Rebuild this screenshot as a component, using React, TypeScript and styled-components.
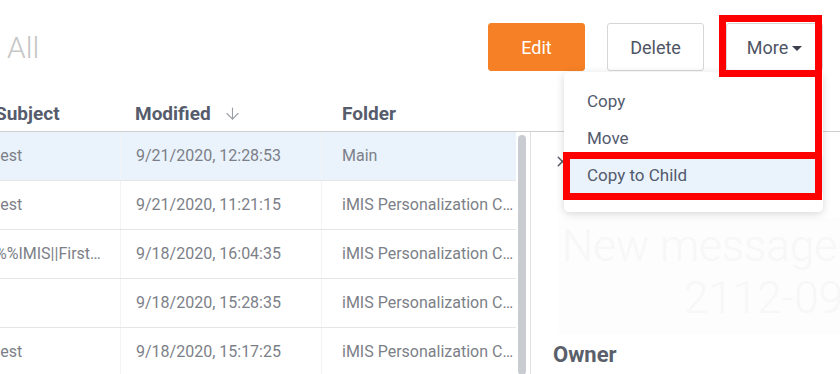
import React from 'react';
import styled, { createGlobalStyle } from 'styled-components';
import { ArrowDown, X } from 'lucide-react';

const rows = [
  { subject: 'test', modified: '9/21/2020, 12:28:53', folder: 'Main', selected: true },
  { subject: 'test', modified: '9/21/2020, 11:21:15', folder: 'iMIS Personalization Content' },
  { subject: '%%IMIS||FirstName%%', modified: '9/18/2020, 16:04:35', folder: 'iMIS Personalization Content' },
  { subject: '', modified: '9/18/2020, 15:28:35', folder: 'iMIS Personalization Content' },
  { subject: 'test', modified: '9/18/2020, 15:17:25', folder: 'iMIS Personalization Content' },
];

function App() {
  return (
    <>
      <GlobalStyle />
      <Page>
        <TopBar>
          <Title>All</Title>
          <Actions>
            <Button $primary>Edit</Button>
            <Button>Delete</Button>
            <Button>
              More
              <Caret />
            </Button>
          </Actions>
        </TopBar>

        <HeaderRow>
          <HeaderCell>Subject</HeaderCell>
          <HeaderCell>
            Modified
            <ArrowDown size={19} strokeWidth={1.4} color="#9a9da5" />
          </HeaderCell>
          <HeaderCell>Folder</HeaderCell>
        </HeaderRow>

        <Body>
          <TableBody>
            <Rows>
              {rows.map((row, i) => (
                <Row key={i} $selected={row.selected}>
                  <Cell>{row.subject}</Cell>
                  <Cell>{row.modified}</Cell>
                  <Cell>{row.folder}</Cell>
                </Row>
              ))}
            </Rows>
            <ScrollTrack>
              <ScrollThumb />
            </ScrollTrack>
          </TableBody>

          <Panel>
            <CloseButton>
              <X size={17} strokeWidth={2} />
            </CloseButton>
            <Ghost>
              <GhostLine>New message</GhostLine>
              <GhostLine $indent>2112-0920</GhostLine>
            </Ghost>
            <Label>Owner</Label>
          </Panel>
        </Body>

        <Menu>
          <MenuItem>Copy</MenuItem>
          <MenuItem>Move</MenuItem>
          <MenuItem $active>Copy to Child</MenuItem>
        </Menu>

        <MarkMore />
        <MarkLink />
        <MarkItem />
      </Page>
    </>
  );
}

const GlobalStyle = createGlobalStyle`
  html, body {
    margin: 0;
    padding: 0;
    background: #fff;
  }
  body {
    font-family: Roboto, "Noto Sans", sans-serif;
  }
`;

const Page = styled.div`
  position: relative;
  width: 840px;
  height: 374px;
  overflow: hidden;
  background: #fff;
`;

const TopBar = styled.div`
  display: flex;
  align-items: center;
  justify-content: space-between;
  height: 95px;
  padding: 0 17px 0 7px;
  box-sizing: border-box;
`;

const Title = styled.h1`
  margin: 0;
  font-size: 30px;
  font-weight: 300;
  color: #c6c6c6;
`;

const Actions = styled.div`
  display: flex;
  gap: 22px;
  margin-top: -1px;
`;

const Button = styled.button<{ $primary?: boolean }>`
  display: flex;
  align-items: center;
  justify-content: center;
  gap: 4px;
  width: 97px;
  height: 48px;
  padding: 0;
  border-radius: 3px;
  font-family: Roboto, sans-serif;
  font-size: 18px;
  border: 1px solid ${({ $primary }) => ($primary ? '#f58025' : '#d6d6d6')};
  background: ${({ $primary }) => ($primary ? '#f58025' : '#fff')};
  color: ${({ $primary }) => ($primary ? '#fff' : '#4f5464')};
`;

const Caret = styled.span`
  width: 0;
  height: 0;
  border-left: 5px solid transparent;
  border-right: 5px solid transparent;
  border-top: 5px solid #3a3f4c;
  margin-top: 2px;
`;

const HeaderRow = styled.div`
  display: grid;
  grid-template-columns: 140px 201px 1fr;
  margin-left: -20px;
  height: 36px;
  border-bottom: 1px solid #cfcfcf;
`;

const HeaderCell = styled.div`
  display: flex;
  align-items: center;
  gap: 12px;
  padding-left: 15px;
  font-size: 19px;
  font-weight: 700;
  color: #565c6c;
  &:nth-child(3) {
    padding-left: 21px;
  }
`;

const Body = styled.div`
  display: flex;
  height: 243px;
`;

const TableBody = styled.div`
  display: flex;
  width: 550px;
  margin-left: -20px;
  flex-shrink: 0;
`;

const Rows = styled.div`
  flex: 1;
  min-width: 0;
`;

const Row = styled.div<{ $selected?: boolean }>`
  display: grid;
  grid-template-columns: 140px 201px 1fr;
  height: 49px;
  border-bottom: 1px solid #e6e6e6;
  box-sizing: border-box;
  background: ${({ $selected }) => ($selected ? '#eaf3fc' : '#fff')};
`;

const Cell = styled.div`
  padding: 0 8px 0 15px;
  font-size: 16px;
  line-height: 48px;
  color: #7c7f88;
  white-space: nowrap;
  overflow: hidden;
  text-overflow: ellipsis;
  min-width: 0;
  & + & {
    border-left: 1px solid #f1f3f5;
  }
  &:nth-child(3) {
    padding-left: 20px;
    padding-right: 0;
  }
`;

const ScrollTrack = styled.div`
  width: 14px;
  padding: 3px 4px 0 2px;
  box-sizing: border-box;
`;

const ScrollThumb = styled.div`
  width: 8px;
  height: 100%;
  border-radius: 4px;
  background: #c9cdd2;
`;

const Panel = styled.section`
  flex: 1;
  border-left: 1px solid #e0e0e0;
  padding: 21px 0 0 22px;
  overflow: hidden;
`;

const CloseButton = styled.div`
  display: flex;
  width: 17px;
  height: 17px;
  margin-left: 1px;
  color: #555a66;
`;

const Ghost = styled.div`
  margin: 48px 0 0 6px;
  padding: 2px 0 10px;
  width: 320px;
  background: #fdfdfd;
  color: #f7f7f7;
  font-size: 44px;
  font-weight: 300;
  line-height: 52px;
  white-space: nowrap;
`;

const GhostLine = styled.div<{ $indent?: boolean }>`
  padding-left: ${({ $indent }) => ($indent ? '125px' : '3px')};
`;

const Label = styled.h3`
  margin: 8px 0 0;
  font-size: 22px;
  font-weight: 700;
  color: #5a5f6b;
`;

const Menu = styled.ul`
  position: absolute;
  left: 564px;
  top: 72px;
  width: 259px;
  margin: 0;
  padding: 10px 0 19px;
  list-style: none;
  background: #fff;
  border-radius: 5px;
  box-shadow: 0 2px 8px rgba(0, 0, 0, 0.16);
  box-sizing: border-box;
`;

const MenuItem = styled.li<{ $active?: boolean }>`
  display: flex;
  align-items: center;
  height: 37px;
  padding-left: 23px;
  font-size: 17px;
  color: #535a6d;
  background: ${({ $active }) => ($active ? '#eaf3fc' : 'transparent')};
`;

const MarkMore = styled.div`
  position: absolute;
  left: 719px;
  top: 15px;
  width: 103px;
  height: 62px;
  border: 7px solid #ff0000;
  box-sizing: border-box;
`;

const MarkLink = styled.div`
  position: absolute;
  left: 815px;
  top: 77px;
  width: 7px;
  height: 75px;
  background: #ff0000;
`;

const MarkItem = styled.div`
  position: absolute;
  left: 563px;
  top: 152px;
  width: 259px;
  height: 48px;
  border: 7px solid #ff0000;
  box-sizing: border-box;
`;

export default App;
